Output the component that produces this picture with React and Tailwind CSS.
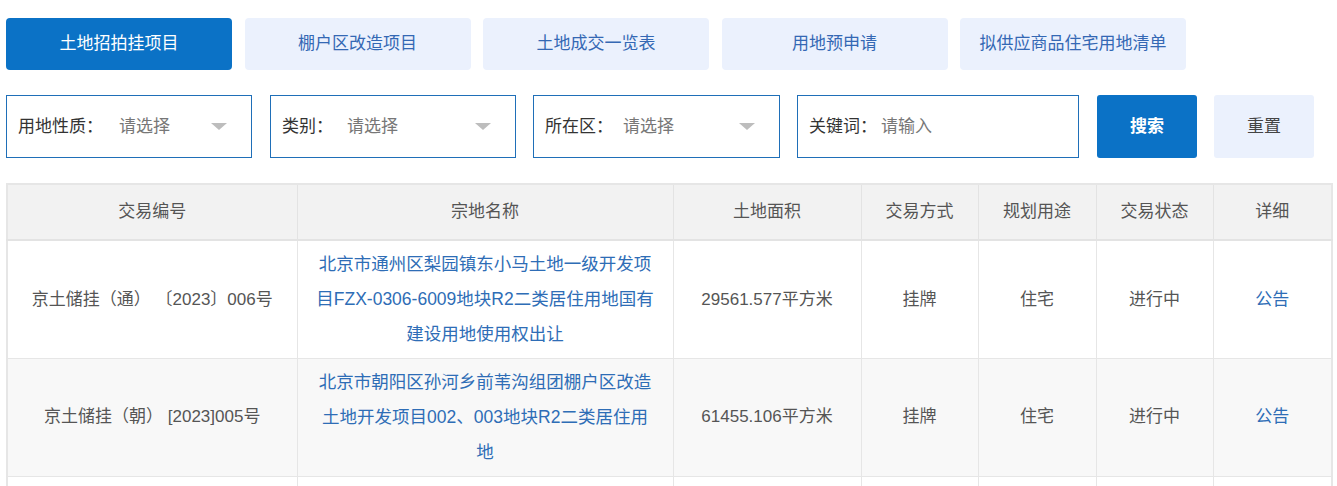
const tabs = ['土地招拍挂项目', '棚户区改造项目', '土地成交一览表', '用地预申请', '拟供应商品住宅用地清单']

const cols = [
  { name: '交易编号', w: 'w-[290px]' },
  { name: '宗地名称', w: 'w-[376px]' },
  { name: '土地面积', w: 'w-[188px]' },
  { name: '交易方式', w: 'w-[117px]' },
  { name: '规划用途', w: 'w-[118px]' },
  { name: '交易状态', w: 'w-[117px]' },
  { name: '详细', w: 'w-[119px]' },
]

const rows = [
  {
    no: '京土储挂（通） 〔2023〕006号',
    name: '北京市通州区梨园镇东小马土地一级开发项目FZX-0306-6009地块R2二类居住用地国有建设用地使用权出让',
    area: '29561.577平方米',
  },
  {
    no: '京土储挂（朝） [2023]005号',
    name: '北京市朝阳区孙河乡前苇沟组团棚户区改造土地开发项目002、003地块R2二类居住用地',
    area: '61455.106平方米',
  },
]

function Select({ label, className, gap }) {
  return (
    <div className={`flex items-center h-[63px] border border-[#1f6fb8] pl-[11px] ${className}`}>
      <span className="text-[#333]">{label}</span>
      <span className={`text-[#777] ${gap}`}>请选择</span>
      <span className="ml-auto mr-[24px] w-0 h-0 border-l-[8px] border-r-[8px] border-t-[7px] border-l-transparent border-r-transparent border-t-[#bdbdbd]" />
    </div>
  )
}

export default function App() {
  return (
    <div className="bg-white w-[1337px] h-[486px] overflow-hidden pl-[6px] pt-[18px] text-[17px]" style={{ fontFamily: '"Liberation Sans", "Noto Sans CJK SC", sans-serif' }}>
      <div className="flex gap-[12.5px]">
        {tabs.map((t, i) => (
          <div
            key={t}
            className={`w-[226px] h-[52px] rounded-[4px] flex items-center justify-center ${i === 0 ? 'bg-[#0b72c6] text-white' : 'bg-[#ebf1fd] text-[#3468b4]'}`}
          >
            {t}
          </div>
        ))}
      </div>

      <div className="flex mt-[25px]">
        <Select label="用地性质：" gap="ml-[16px]" className="w-[246px]" />
        <Select label="类别：" gap="ml-[14px]" className="w-[246px] ml-[18px]" />
        <Select label="所在区：" gap="ml-[10px]" className="w-[247px] ml-[17px]" />
        <div className="flex items-center h-[63px] w-[282px] ml-[17px] border border-[#1f6fb8] pl-[11px]">
          <span className="text-[#333]">关键词：</span>
          <span className="text-[#777] ml-[4px]">请输入</span>
        </div>
        <div className="w-[100px] h-[63px] ml-[18px] rounded-[3px] bg-[#0b72c6] text-white font-bold flex items-center justify-center">搜索</div>
        <div className="w-[100px] h-[63px] ml-[17px] rounded-[3px] bg-[#ebf1fd] text-[#444] flex items-center justify-center">重置</div>
      </div>

      <table className="mt-[25px] w-[1325px] table-fixed border-collapse border-2 border-[#e6e6e6] text-[#555]">
        <thead>
          <tr className="bg-[#f2f2f2] h-[56px] border-b-2 border-[#e3e3e3]">
            {cols.map(c => (
              <th key={c.name} className={`${c.w} font-normal border border-[#e3e3e3]`}>{c.name}</th>
            ))}
          </tr>
        </thead>
        <tbody>
          {rows.map((r, i) => (
            <tr key={r.no} className={`h-[118px] ${i % 2 ? 'bg-[#f8f8f8]' : 'bg-white'}`}>
              <td className="border border-[#e6e6e6] text-center whitespace-pre">{r.no}</td>
              <td className="border border-[#e6e6e6] text-center px-[18px] leading-[35px] text-[#2e6db6] text-[17.5px]">{r.name}</td>
              <td className="border border-[#e6e6e6] text-center">{r.area}</td>
              <td className="border border-[#e6e6e6] text-center">挂牌</td>
              <td className="border border-[#e6e6e6] text-center">住宅</td>
              <td className="border border-[#e6e6e6] text-center">进行中</td>
              <td className="border border-[#e6e6e6] text-center text-[#2e6db6]">公告</td>
            </tr>
          ))}
          <tr className="h-[60px] bg-white">
            {cols.map(c => <td key={c.name} className="border border-[#e6e6e6]" />)}
          </tr>
        </tbody>
      </table>
    </div>
  )
}
